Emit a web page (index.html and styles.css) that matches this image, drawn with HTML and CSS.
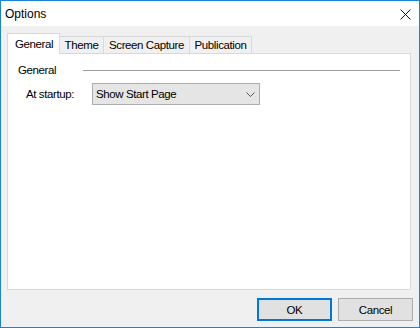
FILE: index.html
```html
<!DOCTYPE html>
<html>
<head>
<meta charset="utf-8">
<link rel="stylesheet" href="styles.css">
</head>
<body>
<div class="window">
  <div class="titlebar">
    <span class="title">Options</span>
    <svg class="close" width="11" height="11" viewBox="0 0 11 11"><path d="M0.5 0.5 L10.5 10.5 M10.5 0.5 L0.5 10.5" stroke="#111" stroke-width="1" fill="none"/></svg>
  </div>
  <div class="body">
    <div class="tabs">
      <div class="tab active">General</div>
      <div class="tab t-theme">Theme</div>
      <div class="tab t-capture">Screen Capture</div>
      <div class="tab t-pub">Publication</div>
    </div>
    <div class="panel">
      <div class="group">
        <span class="group-label">General</span>
        <span class="group-line"></span>
      </div>
      <div class="field">
        <span class="field-label">At startup:</span>
        <div class="select">
          <span>Show Start Page</span>
          <svg width="9" height="5" viewBox="0 0 9 5"><path d="M0.5 0.5 L4.5 4.5 L8.5 0.5" stroke="#555" stroke-width="1" fill="none"/></svg>
        </div>
      </div>
    </div>
    <div class="buttons">
      <div class="btn default">OK</div>
      <div class="btn">Cancel</div>
    </div>
  </div>
</div>
</body>
</html>
```
FILE: styles.css
```css
html, body {
  margin: 0;
  padding: 0;
}
body {
  font-family: "Liberation Sans", Arial, sans-serif;
  color: #000;
}
.window {
  width: 420px;
  height: 328px;
  box-sizing: border-box;
  border: 1px solid #1883d7;
  display: flex;
  flex-direction: column;
}
.titlebar {
  height: 25px;
  flex: none;
  background: #fff;
  display: flex;
  align-items: center;
  padding-left: 4px;
  padding-right: 8px;
}
.title {
  font-size: 12px;
}
.close {
  margin-left: auto;
  margin-top: 2px;
}
.body {
  flex: 1;
  background: #f0f0f0;
  padding: 7px 6px 6px 6px;
  display: flex;
  flex-direction: column;
  font-size: 11.5px;
  letter-spacing: -0.4px;
}
.tabs {
  height: 20px;
  display: flex;
  align-items: flex-end;
  flex: none;
}
.tab {
  box-sizing: border-box;
  height: 17px;
  border-top: 1px solid #d9d9d9;
  border-right: 1px solid #d9d9d9;
  background: #f0f0f0;
  display: flex;
  align-items: center;
  justify-content: center;
}
.tab.active {
  width: 53px;
  height: 21px;
  border: 1px solid #d9d9d9;
  border-bottom: none;
  background: #fff;
  margin-bottom: -1px;
  position: relative;
  z-index: 1;
  justify-content: flex-start;
  padding-left: 7px;
  padding-bottom: 1px;
}
.t-theme { width: 44px; }
.t-capture { width: 86px; }
.t-pub { width: 62px; }
.panel {
  flex: 1;
  margin-right: 2px;
  background: #fff;
  border: 1px solid #d9d9d9;
  padding: 9px 10px 0 10px;
}
.group {
  display: flex;
  align-items: center;
  height: 14px;
}
.group-line {
  flex: 1;
  margin-left: 27px;
  height: 1px;
  background: #a0a0a0;
  margin-top: 1px;
}
.field {
  display: flex;
  align-items: center;
  margin-top: 6px;
  padding-left: 8px;
}
.field-label {
  width: 66px;
}
.select {
  box-sizing: border-box;
  width: 168px;
  height: 22px;
  background: #e5e5e5;
  border: 1px solid #adadad;
  display: flex;
  align-items: center;
  justify-content: space-between;
  padding: 0 4px 0 3px;
}
.buttons {
  display: flex;
  justify-content: flex-end;
  gap: 6px;
  margin-top: 8px;
  flex: none;
}
.btn {
  box-sizing: border-box;
  width: 75px;
  height: 23px;
  background: #e1e1e1;
  border: 1px solid #adadad;
  display: flex;
  align-items: center;
  justify-content: center;
}
.btn.default {
  border: 2px solid #0078d7;
}
```
